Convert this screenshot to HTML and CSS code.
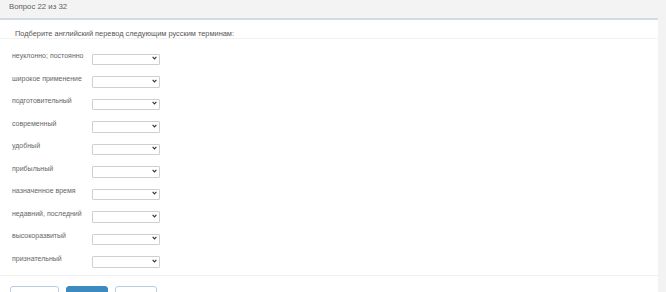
FILE: index.html
```html
<!DOCTYPE html>
<html lang="ru">
<head>
    <meta charset="UTF-8">
    <title>Вопрос 22 из 32</title>
    <link rel="stylesheet" href="styles.css">
</head>
<body>
    <div class="top">Вопрос 22 из 32</div>
    <div class="panel">
        <div class="question">Подберите английский перевод следующим русским терминам:</div>
        <div class="rows">
            <div class="row"><label>неуклонно; постоянно</label><div class="pick"><select></select><svg class="chev" viewBox="0 0 8 6"><path d="M1 1.2 L4 4.4 L7 1.2" fill="none" stroke="#333" stroke-width="1.8"/></svg></div></div>
            <div class="row"><label>широкое применение</label><div class="pick"><select></select><svg class="chev" viewBox="0 0 8 6"><path d="M1 1.2 L4 4.4 L7 1.2" fill="none" stroke="#333" stroke-width="1.8"/></svg></div></div>
            <div class="row"><label>подготовительный</label><div class="pick"><select></select><svg class="chev" viewBox="0 0 8 6"><path d="M1 1.2 L4 4.4 L7 1.2" fill="none" stroke="#333" stroke-width="1.8"/></svg></div></div>
            <div class="row"><label>современный</label><div class="pick"><select></select><svg class="chev" viewBox="0 0 8 6"><path d="M1 1.2 L4 4.4 L7 1.2" fill="none" stroke="#333" stroke-width="1.8"/></svg></div></div>
            <div class="row"><label>удобный</label><div class="pick"><select></select><svg class="chev" viewBox="0 0 8 6"><path d="M1 1.2 L4 4.4 L7 1.2" fill="none" stroke="#333" stroke-width="1.8"/></svg></div></div>
            <div class="row"><label>прибыльный</label><div class="pick"><select></select><svg class="chev" viewBox="0 0 8 6"><path d="M1 1.2 L4 4.4 L7 1.2" fill="none" stroke="#333" stroke-width="1.8"/></svg></div></div>
            <div class="row"><label>назначенное время</label><div class="pick"><select></select><svg class="chev" viewBox="0 0 8 6"><path d="M1 1.2 L4 4.4 L7 1.2" fill="none" stroke="#333" stroke-width="1.8"/></svg></div></div>
            <div class="row"><label>недавний, последний</label><div class="pick"><select></select><svg class="chev" viewBox="0 0 8 6"><path d="M1 1.2 L4 4.4 L7 1.2" fill="none" stroke="#333" stroke-width="1.8"/></svg></div></div>
            <div class="row"><label>высокоразвитый</label><div class="pick"><select></select><svg class="chev" viewBox="0 0 8 6"><path d="M1 1.2 L4 4.4 L7 1.2" fill="none" stroke="#333" stroke-width="1.8"/></svg></div></div>
            <div class="row"><label>признательный</label><div class="pick"><select></select><svg class="chev" viewBox="0 0 8 6"><path d="M1 1.2 L4 4.4 L7 1.2" fill="none" stroke="#333" stroke-width="1.8"/></svg></div></div>
        </div>
        <div class="actions">
            <button class="btn wide"></button>
            <button class="btn primary"></button>
            <button class="btn"></button>
        </div>
    </div>
</body>
</html>
```
FILE: styles.css
```css
body {
    margin: 0;
    background: #f3f3f3;
    font-family: "Liberation Sans", Arial, sans-serif;
    color: #666;
    overflow: hidden;
}
.top {
    height: 18px;
    padding-left: 9px;
    font-size: 7.8px;
    line-height: 14px;
    color: #5f5f5f;
}
.panel {
    width: 658px;
    background: #fff;
    border-top: 2px solid #d5dbe2;
}
.question {
    padding: 10px 15px 0;
    font-size: 7.4px;
    line-height: 8px;
    color: #555;
    border-bottom: 1px solid #f2f2f2;
}
.rows {
    padding: 8px 0 3px 12px;
    border-bottom: 1px solid #efefef;
}
.row {
    height: 22.5px;
    display: flex;
    align-items: center;
}
.row label {
    width: 80px;
    font-size: 7px;
    line-height: 9px;
    margin-top: -5px;
    color: #666;
}
.pick {
    position: relative;
    width: 68px;
    height: 11.5px;
}
.pick select {
    appearance: none;
    -webkit-appearance: none;
    width: 100%;
    height: 100%;
    margin: 0;
    padding: 0;
    border: 1px solid #cfcfcf;
    border-radius: 1px;
    background: #fff;
    box-sizing: border-box;
}
.chev {
    position: absolute;
    right: 3px;
    top: 3.5px;
    width: 5px;
    height: 4px;
}
.actions {
    display: flex;
    gap: 7px;
    padding: 10px 0 0 10px;
}
.btn {
    width: 42px;
    height: 20px;
    border: 1px solid #b7cde3;
    border-radius: 3px;
    background: #fff;
}
.btn.wide {
    width: 49px;
}
.btn.primary {
    background: #3c8ac0;
    border-color: #3c8ac0;
}
```
